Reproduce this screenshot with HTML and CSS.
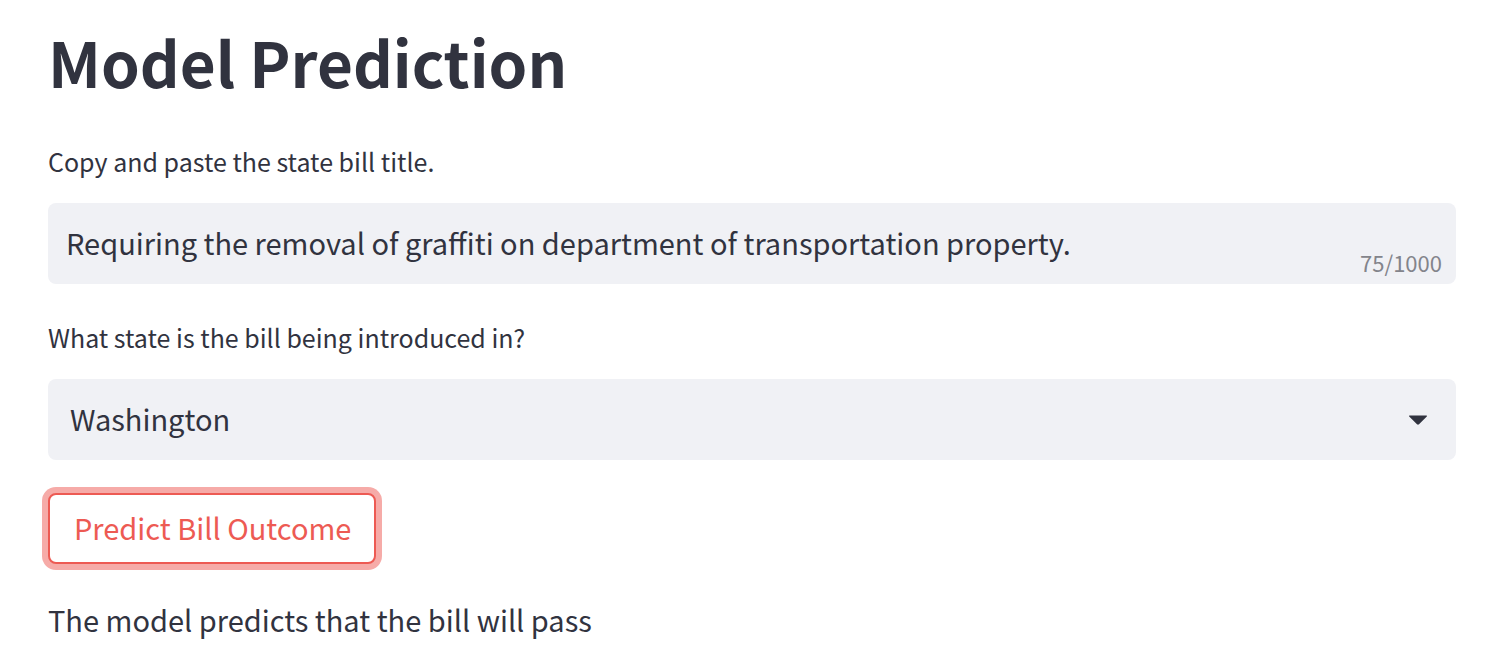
FILE: index.html
```html
<!DOCTYPE html>
<html lang="en">
<head>
<meta charset="utf-8">
<meta name="viewport" content="width=device-width, initial-scale=1">
<title>Model Prediction</title>
<link rel="stylesheet" href="styles.css">
</head>
<body>
<main class="page">
  <h1 class="title">Model Prediction</h1>
  <form class="form">
    <div class="field">
      <label class="label" for="bill-title">Copy and paste the state bill title.</label>
      <div class="control">
        <input class="input" id="bill-title" type="text" maxlength="1000" value="Requiring the removal of graffiti on department of transportation property.">
        <span class="counter">75/1000</span>
      </div>
    </div>
    <div class="field">
      <label class="label" for="state">What state is the bill being introduced in?</label>
      <div class="control">
        <select class="input select" id="state">
          <option selected>Washington</option>
        </select>
        <svg class="caret" viewBox="0 0 18 10" aria-hidden="true"><path d="M.6 .4h16.800c.6 0 .8.600.4 1L10 9.200c-.6.600-1.400.600-2 0L.2 1.400C-.2 1 0 .4.6.4z"/></svg>
      </div>
    </div>
    <button class="button" type="button">Predict Bill Outcome</button>
  </form>
  <p class="result">The model predicts that the bill will pass</p>
</main>
</body>
</html>
```

FILE: styles.css
```css
* {
  box-sizing: border-box;
}

body {
  margin: 0;
  background: #ffffff;
  color: #31333f;
  font-family: "Noto Sans CJK SC", "Noto Sans", sans-serif;
  font-size: 29px;
}

.page {
  padding: 21px 32px 8px 48px;
}

.title {
  margin: 0;
  font-size: 62px;
  font-weight: 700;
  line-height: 80px;
}

.form {
  display: flex;
  flex-direction: column;
  align-items: flex-start;
  gap: 33px;
  margin-top: 40px;
}

.field {
  display: flex;
  flex-direction: column;
  gap: 22px;
  width: 100%;
}

.label {
  font-size: 25px;
  line-height: 40px;
}

.control {
  position: relative;
}

.input {
  display: block;
  width: 100%;
  height: 81px;
  padding: 0 18px 4px;
  border: 0;
  border-radius: 8px;
  background: #f0f1f5;
  color: inherit;
  font: inherit;
}

.select {
  padding: 0 22px 4px;
  appearance: none;
}

.counter {
  position: absolute;
  right: 14px;
  bottom: 6px;
  color: #83848b;
  font-size: 22px;
  line-height: 32px;
}

.caret {
  position: absolute;
  top: 36px;
  right: 29px;
  width: 18px;
  height: 10px;
  fill: #31333f;
}

.button {
  height: 71px;
  padding: 0 23px 4px 24px;
  border: 2px solid #ed5a53;
  border-radius: 8px;
  background: #ffffff;
  box-shadow: 0 0 0 6px #f6aba8;
  color: #ed5a53;
  font: inherit;
}

.result {
  margin: 31px 0 0;
  line-height: 48px;
}
```
